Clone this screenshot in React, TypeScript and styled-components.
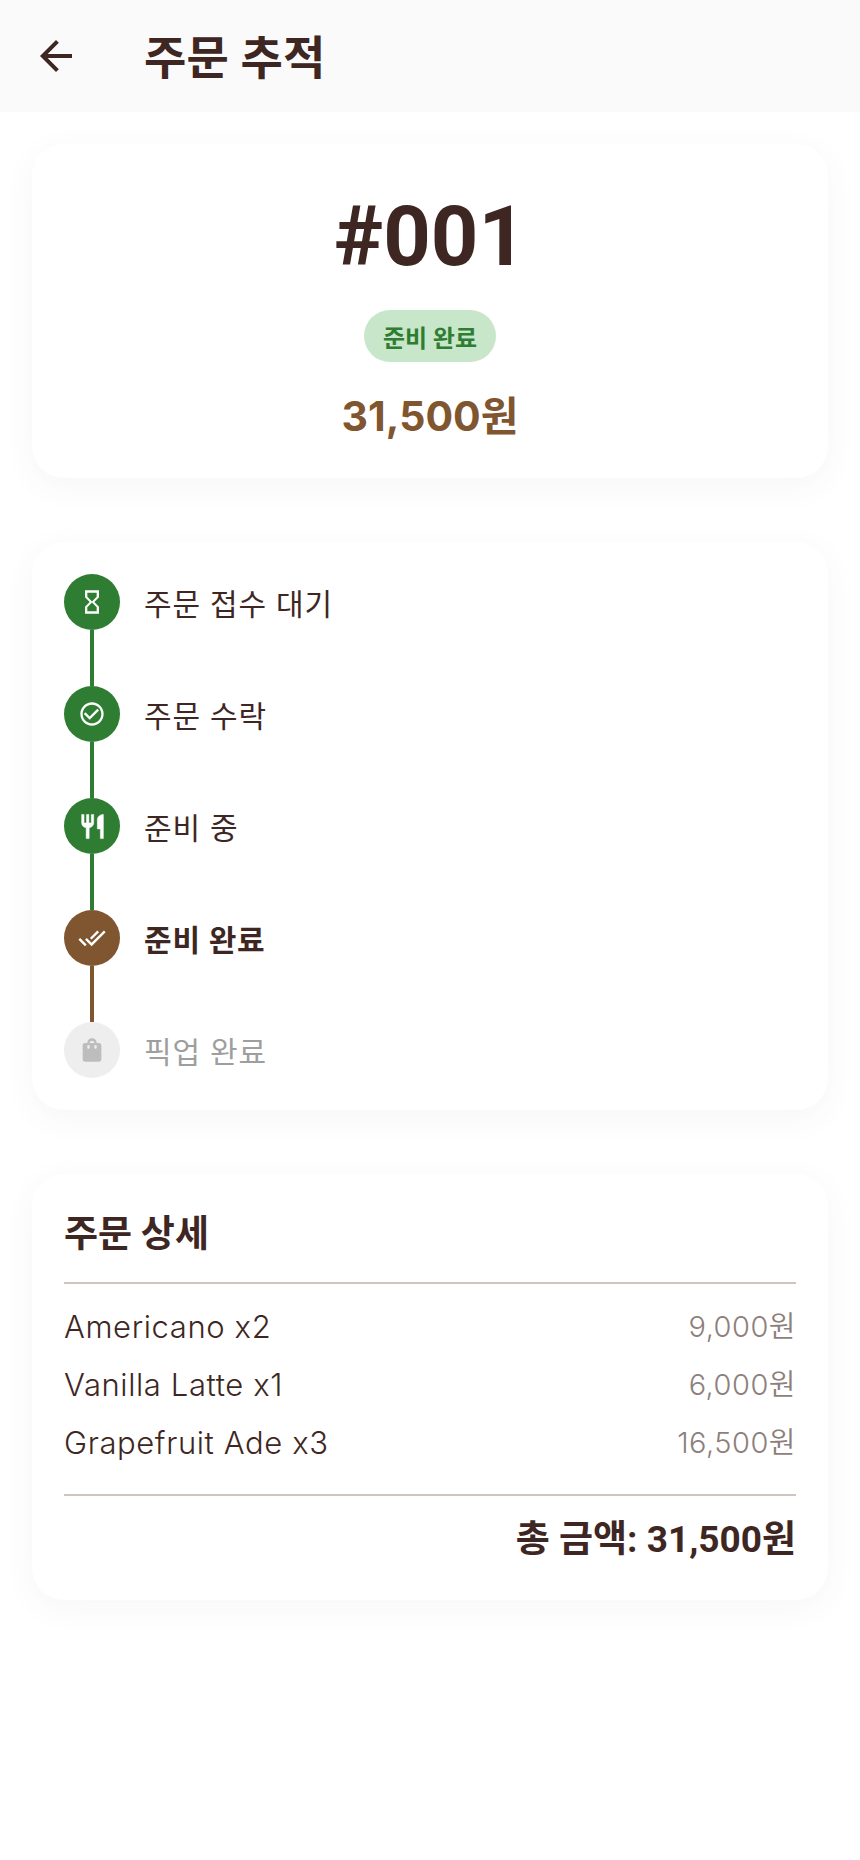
import React from 'react'
import styled, { createGlobalStyle } from 'styled-components'
import {
  MdArrowBack,
  MdCheckCircleOutline,
  MdDoneAll,
  MdHourglassEmpty,
  MdShoppingBag,
} from 'react-icons/md'

const colors = {
  text: '#3e2723',
  brown: '#7f5630',
  green: '#2e7d32',
  badge: '#c8e6c9',
  muted: '#8d7f7c',
  divider: '#d0c4c1',
  idle: '#eeeeee',
  idleIcon: '#bdbdbd',
  idleText: '#9e9e9e',
}

const roboto = 'Roboto, "Noto Sans CJK KR", sans-serif'
const inter = 'Inter, "Noto Sans CJK KR", sans-serif'

const GlobalStyle = createGlobalStyle`
  html, body {
    margin: 0;
    padding: 0;
    background: #fff;
    font-family: ${inter};
    font-optical-sizing: none;
    color: ${colors.text};
  }
  * { box-sizing: border-box; }
`

const Page = styled.div`
  width: 860px;
  height: 1860px;
  background: #fff;
  overflow: hidden;
`

const AppBar = styled.header`
  height: 112px;
  background: #fafafa;
  display: flex;
  align-items: center;
  padding-left: 32px;
`

const BackButton = styled.button`
  width: 48px;
  height: 48px;
  padding: 0;
  border: 0;
  background: none;
  color: ${colors.text};
  font-size: 48px;
  display: flex;
  margin-right: 64px;
`

const Title = styled.h1`
  margin: 2px 0 0;
  font-size: 46px;
  line-height: 56px;
  font-weight: 700;
  letter-spacing: 0.3px;
`

const Content = styled.main`
  padding: 32px;
  display: flex;
  flex-direction: column;
  gap: 64px;
`

const Card = styled.section`
  background: #fff;
  border-radius: 32px;
  padding: 32px;
  box-shadow: 0 8px 32px rgba(121, 85, 72, 0.05);
`

const SummaryCard = styled(Card)`
  height: 334px;
  display: flex;
  flex-direction: column;
  align-items: center;
`

const OrderNumber = styled.div`
  font-family: ${roboto};
  font-size: 83px;
  line-height: 112px;
  font-weight: 700;
  margin: 5px 0 17px;
`

const Badge = styled.div`
  height: 52px;
  width: 132px;
  border-radius: 26px;
  background: ${colors.badge};
  color: ${colors.green};
  font-size: 24px;
  font-weight: 700;
  display: flex;
  align-items: center;
  justify-content: center;
`

const Price = styled.div`
  margin-top: 28px;
  font-size: 41px;
  line-height: 52px;
  font-weight: 700;
  color: ${colors.brown};
`

const Step = styled.div`
  display: flex;
  gap: 24px;
`

const Rail = styled.div`
  display: flex;
  flex-direction: column;
  align-items: center;
  width: 56px;
`

const Dot = styled.div<{ $bg: string; $fg: string }>`
  width: 56px;
  height: 56px;
  border-radius: 50%;
  background: ${(p) => p.$bg};
  color: ${(p) => p.$fg};
  font-size: 28px;
  display: flex;
  align-items: center;
  justify-content: center;
`

const RestaurantSvg = styled.svg`
  width: 29px;
  height: 29px;
  fill: currentColor;
  stroke: currentColor;
  stroke-width: 0.4;
`

const RestaurantIcon = () => (
  <RestaurantSvg viewBox="0 0 24 24">
    <path d="M11 9H9V2H7v7H5V2H3v7c0 2.12 1.66 3.84 3.75 3.97V22h2.5v-9.03C11.34 12.84 13 11.12 13 9V2h-2v7zm5-3v8h2.5v8H21V2c-2.76 0-5 2.24-5 4z" />
  </RestaurantSvg>
)

const Line = styled.div<{ $bg: string }>`
  width: 4px;
  height: 56px;
  background: ${(p) => p.$bg};
`

const StepLabel = styled.div<{ $color: string; $bold: boolean }>`
  height: 56px;
  display: flex;
  align-items: center;
  font-size: 30px;
  letter-spacing: 0.8px;
  color: ${(p) => p.$color};
  font-weight: ${(p) => (p.$bold ? 700 : 400)};
`

const DetailTitle = styled.h2`
  margin: 0;
  font-size: 37px;
  line-height: 56px;
  font-weight: 700;
`

const Divider = styled.hr<{ $top?: number }>`
  margin: ${(p) => p.$top ?? 0}px 0 0;
  border: 0;
  height: 2px;
  background: ${colors.divider};
`

const Items = styled.div`
  display: flex;
  flex-direction: column;
  gap: 16px;
  padding: 22px 0 30px;
`

const Row = styled.div`
  display: flex;
  justify-content: space-between;
  font-size: 31px;
  line-height: 42px;
  letter-spacing: 0.6px;
  font-weight: 350;
`

const Amount = styled.span`
  color: ${colors.muted};
  font-size: 29px;
  letter-spacing: 0.5px;
`

const Total = styled.div`
  font-family: ${roboto};
  margin-top: 16px;
  text-align: right;
  font-size: 37px;
  line-height: 56px;
  font-weight: 700;
`

const steps = [
  { label: '주문 접수 대기', icon: <MdHourglassEmpty />, state: 'done' },
  { label: '주문 수락', icon: <MdCheckCircleOutline />, state: 'done' },
  { label: '준비 중', icon: <RestaurantIcon />, state: 'done' },
  { label: '준비 완료', icon: <MdDoneAll />, state: 'current' },
  { label: '픽업 완료', icon: <MdShoppingBag />, state: 'idle' },
]

const items = [
  { name: 'Americano x2', price: '9,000원' },
  { name: 'Vanilla Latte x1', price: '6,000원' },
  { name: 'Grapefruit Ade x3', price: '16,500원' },
]

const dotColor = (state: string) =>
  state === 'done' ? colors.green : state === 'current' ? colors.brown : colors.idle

export default function App() {
  return (
    <Page>
      <GlobalStyle />
      <AppBar>
        <BackButton aria-label="back">
          <MdArrowBack />
        </BackButton>
        <Title>주문 추적</Title>
      </AppBar>
      <Content>
        <SummaryCard>
          <OrderNumber>#001</OrderNumber>
          <Badge>준비 완료</Badge>
          <Price>31,500원</Price>
        </SummaryCard>
        <Card>
          {steps.map((step, i) => (
            <Step key={step.label}>
              <Rail>
                <Dot
                  $bg={dotColor(step.state)}
                  $fg={step.state === 'idle' ? colors.idleIcon : '#fff'}
                >
                  {step.icon}
                </Dot>
                {i < steps.length - 1 && <Line $bg={dotColor(step.state)} />}
              </Rail>
              <StepLabel
                $color={step.state === 'idle' ? colors.idleText : colors.text}
                $bold={step.state === 'current'}
              >
                {step.label}
              </StepLabel>
            </Step>
          ))}
        </Card>
        <Card>
          <DetailTitle>주문 상세</DetailTitle>
          <Divider $top={20} />
          <Items>
            {items.map((item) => (
              <Row key={item.name}>
                <span>{item.name}</span>
                <Amount>{item.price}</Amount>
              </Row>
            ))}
          </Items>
          <Divider />
          <Total>총 금액: 31,500원</Total>
        </Card>
      </Content>
    </Page>
  )
}
